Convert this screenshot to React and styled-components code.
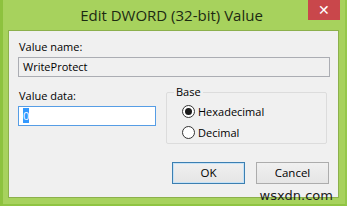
import React from 'react';
import styled, { createGlobalStyle } from 'styled-components';

const Global = createGlobalStyle`
  html, body { margin: 0; padding: 0; }
  body { width: 347px; height: 206px; overflow: hidden; background: #a6d15c; }
`;

const Window = styled.div`
  position: relative;
  width: 347px;
  height: 206px;
  box-sizing: border-box;
  background: #a7d25d;
  border-left: 3px solid #8dc23e;
  border-right: 2px solid #95c84a;
  border-bottom: 2px solid #8fc442;
  padding: 0 6px 6px 5px;
  display: flex;
  flex-direction: column;
  font-family: "Open Sans", "Noto Sans", sans-serif;
`;

const TitleBar = styled.div`
  height: 30px;
  display: grid;
  grid-template-columns: 31px 1fr 31px;
  align-items: start;
`;

const Title = styled.div`
  text-align: center;
  font-size: 15px;
  line-height: 31px;
  color: #1c2a12;
  margin-left: -4px;
`;

const Close = styled.div`
  height: 20px;
  background: #c9474b;
  color: #fff;
  font-size: 14px;
  line-height: 19px;
  text-align: center;
  margin-right: -1px;
`;

const Client = styled.div`
  flex: 1;
  background: #f0f0f0;
  border: 1px solid #8cb04c;
  padding: 9px 8px 0 9px;
  color: #000;
`;

const Label = styled.div`
  font-size: 11px;
  line-height: 14px;
  margin-left: 1px;
`;

const Field = styled.div`
  box-sizing: border-box;
  height: 20px;
  width: ${p => p.$w};
  border: 1px solid ${p => (p.$focus ? '#569de5' : '#abadb3')};
  background: ${p => (p.$focus ? '#fff' : '#f0f0f0')};
  padding: 0 4px;
  font-size: 11px;
  line-height: 18px;
  margin-top: 3px;
`;

const Selected = styled.span`
  background: #3399ff;
  color: #fff;
`;

const Row = styled.div`
  display: flex;
  justify-content: space-between;
  margin-top: 12px;
`;

const Group = styled.fieldset`
  box-sizing: border-box;
  width: 161px;
  height: 58px;
  margin: 0 3px 0 0;
  padding: 3px 0 0 15px;
  border: 1px solid #dcdcdc;
  border-radius: 2px;
  position: relative;
  top: -3px;
`;

const Legend = styled.legend`
  font-size: 11px;
  padding: 0 2px;
  margin-left: -8px;
  line-height: 12px;
`;

const Radio = styled.div`
  display: flex;
  align-items: center;
  gap: 3px;
  height: 21px;
  font-size: 11px;
`;

const Dot = styled.span`
  box-sizing: border-box;
  width: 13px;
  height: 13px;
  border-radius: 50%;
  border: 1px solid #333;
  background: #fff;
  display: flex;
  align-items: center;
  justify-content: center;
  &::after {
    content: '';
    width: 7px;
    height: 7px;
    border-radius: 50%;
    background: ${p => (p.$on ? '#1a1a1a' : 'transparent')};
  }
`;

const Buttons = styled.div`
  display: flex;
  justify-content: flex-end;
  gap: 11px;
  margin-top: 15px;
  margin-right: 1px;
`;

const Button = styled.div`
  box-sizing: border-box;
  width: 73px;
  height: 22px;
  border: 1px solid ${p => (p.$def ? '#3c7fb1' : '#acacac')};
  background: linear-gradient(#f0f0f0, #e5e5e5);
  box-shadow: ${p => (p.$def ? 'inset 0 0 0 1px #c5e2f7' : 'none')};
  text-align: center;
  font-size: 11.5px;
  line-height: 20px;
`;

const Mark = styled.div`
  position: absolute;
  right: 12px;
  bottom: 1px;
  font-family: "DejaVu Sans", sans-serif;
  font-size: 13px;
  color: #202020;
  line-height: 14px;
`;

export default function App() {
  return (
    <>
      <Global />
      <Window>
        <TitleBar>
          <span />
          <Title>Edit DWORD (32-bit) Value</Title>
          <Close>✕</Close>
        </TitleBar>
        <Client>
          <Label>Value name:</Label>
          <Field $w="312px">WriteProtect</Field>
          <Row>
            <div>
              <Label>Value data:</Label>
              <Field $w="138px" $focus><Selected>0</Selected></Field>
            </div>
            <Group>
              <Legend>Base</Legend>
              <Radio><Dot $on />Hexadecimal</Radio>
              <Radio><Dot />Decimal</Radio>
            </Group>
          </Row>
          <Buttons>
            <Button $def>OK</Button>
            <Button>Cancel</Button>
          </Buttons>
        </Client>
        <Mark>wsxdn.com</Mark>
      </Window>
    </>
  );
}
